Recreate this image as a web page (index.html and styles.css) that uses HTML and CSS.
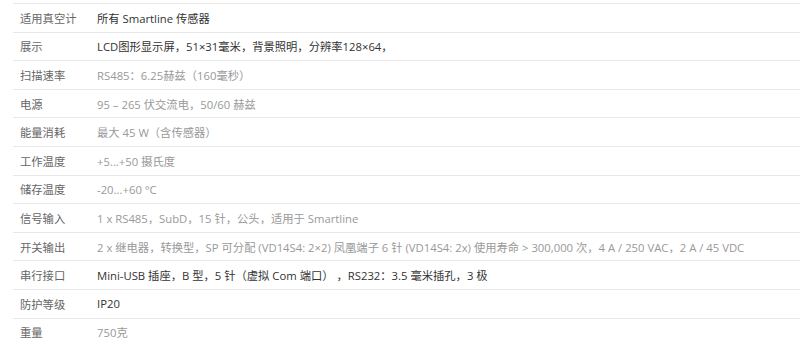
FILE: index.html
```html
<!DOCTYPE html>
<html lang="zh-CN">
<head>
<meta charset="utf-8">
<link rel="stylesheet" href="styles.css">
</head>
<body>
<div class="specs">
  <div class="row"><div class="label">适用真空计</div><div class="value dark">所有 Smartline 传感器</div></div>
  <div class="row"><div class="label">展示</div><div class="value dark">LCD图形显示屏，51×31毫米，背景照明，分辨率128×64，</div></div>
  <div class="row"><div class="label">扫描速率</div><div class="value light">RS485：6.25赫兹（160毫秒）</div></div>
  <div class="row"><div class="label">电源</div><div class="value light">95 – 265 伏交流电，50/60 赫兹</div></div>
  <div class="row"><div class="label">能量消耗</div><div class="value light">最大 45 W（含传感器）</div></div>
  <div class="row"><div class="label">工作温度</div><div class="value light">+5...+50 摄氏度</div></div>
  <div class="row"><div class="label">储存温度</div><div class="value light">-20...+60 °C</div></div>
  <div class="row"><div class="label">信号输入</div><div class="value light">1 x RS485，SubD，15 针，公头，适用于 Smartline</div></div>
  <div class="row"><div class="label">开关输出</div><div class="value light">2 x 继电器，转换型，SP 可分配 (VD14S4: 2×2) 凤凰端子 6 针 (VD14S4: 2x) 使用寿命 &gt; 300,000 次，4 A / 250 VAC，2 A / 45 VDC</div></div>
  <div class="row"><div class="label">串行接口</div><div class="value dark">Mini-USB 插座，B 型，5 针（虚拟 Com 端口） ，RS232：3.5 毫米插孔，3 极</div></div>
  <div class="row"><div class="label">防护等级</div><div class="value dark">IP20</div></div>
  <div class="row"><div class="label">重量</div><div class="value light">750克</div></div>
</div>
</body>
</html>
```
FILE: styles.css
```css
html, body {
  margin: 0;
  padding: 0;
  background: #ffffff;
}
body {
  font-family: "Open Sans", "Noto Sans CJK SC", sans-serif;
  font-size: 11.3px;
}
.specs {
  margin-left: 13px;
  padding-top: 3px;
}
.row {
  display: flex;
  align-items: center;
  height: 28.6px;
  box-sizing: border-box;
  border-top: 1px solid #e8e8e8;
  white-space: nowrap;
}
.label {
  width: 84px;
  padding-left: 7px;
  box-sizing: border-box;
  color: #666666;
  flex: none;
}
.value.dark {
  color: #333333;
}
.value.light {
  color: #999999;
}
```
